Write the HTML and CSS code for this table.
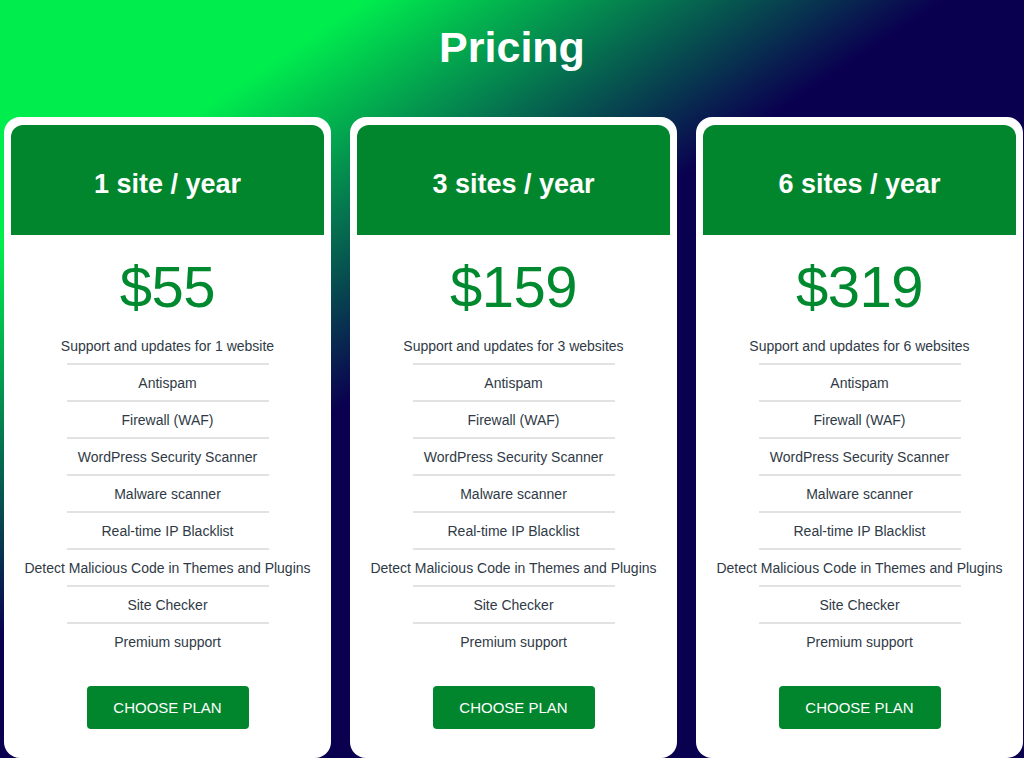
FILE: index.html
```html
<!DOCTYPE html>
<html lang="en">
<head>
<meta charset="utf-8">
<title>Pricing</title>
<link rel="stylesheet" href="styles.css">
</head>
<body>
<div class="page">
  <h1 class="title">Pricing</h1>
  <div class="plans">
    <div class="card">
      <div class="card-head">1 site / year</div>
      <div class="price">$55</div>
      <ul class="features">
        <li>Support and updates for 1 website</li>
        <li>Antispam</li>
        <li>Firewall (WAF)</li>
        <li>WordPress Security Scanner</li>
        <li>Malware scanner</li>
        <li>Real-time IP Blacklist</li>
        <li>Detect Malicious Code in Themes and Plugins</li>
        <li>Site Checker</li>
        <li>Premium support</li>
      </ul>
      <a class="btn" href="#">CHOOSE PLAN</a>
    </div>
    <div class="card">
      <div class="card-head">3 sites / year</div>
      <div class="price">$159</div>
      <ul class="features">
        <li>Support and updates for 3 websites</li>
        <li>Antispam</li>
        <li>Firewall (WAF)</li>
        <li>WordPress Security Scanner</li>
        <li>Malware scanner</li>
        <li>Real-time IP Blacklist</li>
        <li>Detect Malicious Code in Themes and Plugins</li>
        <li>Site Checker</li>
        <li>Premium support</li>
      </ul>
      <a class="btn" href="#">CHOOSE PLAN</a>
    </div>
    <div class="card">
      <div class="card-head">6 sites / year</div>
      <div class="price">$319</div>
      <ul class="features">
        <li>Support and updates for 6 websites</li>
        <li>Antispam</li>
        <li>Firewall (WAF)</li>
        <li>WordPress Security Scanner</li>
        <li>Malware scanner</li>
        <li>Real-time IP Blacklist</li>
        <li>Detect Malicious Code in Themes and Plugins</li>
        <li>Site Checker</li>
        <li>Premium support</li>
      </ul>
      <a class="btn" href="#">CHOOSE PLAN</a>
    </div>
  </div>
</div>
</body>
</html>
```
FILE: styles.css
```css
* { box-sizing: border-box; }
html, body { margin: 0; padding: 0; }
body {
  font-family: "Liberation Sans", Arial, sans-serif;
  background: #0a0050;
}
.page {
  height: 758px;
  overflow: hidden;
  background: linear-gradient(146deg, #00ed4e 0%, #00ed4e 17%, #0a0050 44%, #0a0050 100%);
}
.title {
  margin: 0;
  padding-top: 22px;
  height: 117px;
  font-size: 43px;
  line-height: 50px;
  font-weight: bold;
  color: #fff;
  text-align: center;
}
.plans {
  display: flex;
  gap: 19px;
  padding-left: 4px;
}
.card {
  flex: none;
  width: 327px;
  height: 641px;
  background: #fff;
  border-radius: 16px;
  padding: 8px 7px;
  display: flex;
  flex-direction: column;
  align-items: center;
}
.card-head {
  align-self: stretch;
  height: 110px;
  background: #01862d;
  border-radius: 12px 12px 0 0;
  display: flex;
  align-items: center;
  justify-content: center;
  padding-top: 8px;
  color: #fff;
  font-size: 27px;
  font-weight: bold;
}
.price {
  margin-top: 19px;
  font-size: 58px;
  line-height: 66px;
  color: #00892e;
  letter-spacing: -0.5px;
}
.features {
  list-style: none;
  margin: 8px 0 0;
  padding: 0;
  align-self: stretch;
}
.features li {
  padding-top: 10px;
  font-size: 14px;
  line-height: 17px;
  color: #2f3a46;
  text-align: center;
  white-space: nowrap;
}
.features li::after {
  content: "";
  display: block;
  width: 202px;
  height: 2px;
  margin: 8px auto 0;
  background: #e2e2e2;
}
.features li:last-child::after {
  background: transparent;
}
.btn {
  margin-top: 25px;
  width: 162px;
  height: 43px;
  border-radius: 4px;
  background: #01862d;
  color: #fff;
  font-size: 15px;
  text-decoration: none;
  display: flex;
  align-items: center;
  justify-content: center;
}
```
